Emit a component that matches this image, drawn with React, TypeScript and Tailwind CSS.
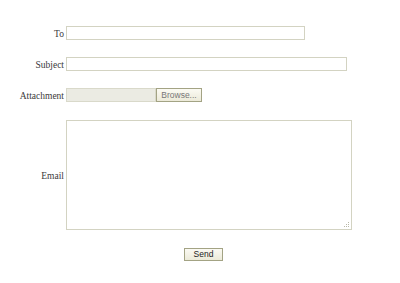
import React from 'react';

export default function App() {
  const label = "w-[66px] pr-[2px] pt-[4px] text-right text-[9.5px] leading-none text-[#3a3a3a] [font-family:'Liberation_Serif',serif]";
  return (
    <div className="w-[400px] h-[283px] bg-white pt-[26px]">
      {/* To */}
      <div className="flex items-center h-[14px]">
        <div className={label}>To</div>
        <div className="w-[239px] h-[14px] border border-[#d3d3c2] bg-white" />
      </div>
      {/* Subject */}
      <div className="flex items-center h-[14px] mt-[17px]">
        <div className={label}>Subject</div>
        <div className="w-[281px] h-[14px] border border-[#d3d3c2] bg-white" />
      </div>
      {/* Attachment */}
      <div className="flex items-center h-[14px] mt-[17px]">
        <div className={label}>Attachment</div>
        <div className="w-[90px] h-[14px] border border-[#d9d9ca] bg-[#ebebe3]" />
        <div className="w-[46px] h-[14px] flex items-center justify-center border border-[#a3a384] bg-gradient-to-b from-[#fbfaf3] to-[#ecead9] text-[8.5px] leading-none text-[#777] [font-family:'Liberation_Sans',sans-serif]">
          Browse...
        </div>
      </div>
      {/* Email */}
      <div className="flex items-center h-[110px] mt-[18px]">
        <div className={label}>Email</div>
        <div className="relative w-[286px] h-[110px] border border-[#d3d3c2] bg-white">
          <svg className="absolute right-[1px] bottom-[1px]" width="7" height="7" viewBox="0 0 7 7">
            <rect x="5" y="1" width="1" height="1" fill="#b8b8a8" />
            <rect x="3" y="3" width="1" height="1" fill="#b8b8a8" />
            <rect x="5" y="3" width="1" height="1" fill="#b8b8a8" />
            <rect x="1" y="5" width="1" height="1" fill="#b8b8a8" />
            <rect x="3" y="5" width="1" height="1" fill="#b8b8a8" />
            <rect x="5" y="5" width="1" height="1" fill="#b8b8a8" />
          </svg>
        </div>
      </div>
      {/* Send */}
      <div className="flex mt-[18px] pl-[184px]">
        <div className="w-[39px] h-[13px] flex items-center justify-center border border-[#a3a384] bg-gradient-to-b from-[#fbfaf3] to-[#ecead9] text-[8.5px] leading-none text-[#222] [font-family:'Liberation_Sans',sans-serif]">
          Send
        </div>
      </div>
    </div>
  );
}
